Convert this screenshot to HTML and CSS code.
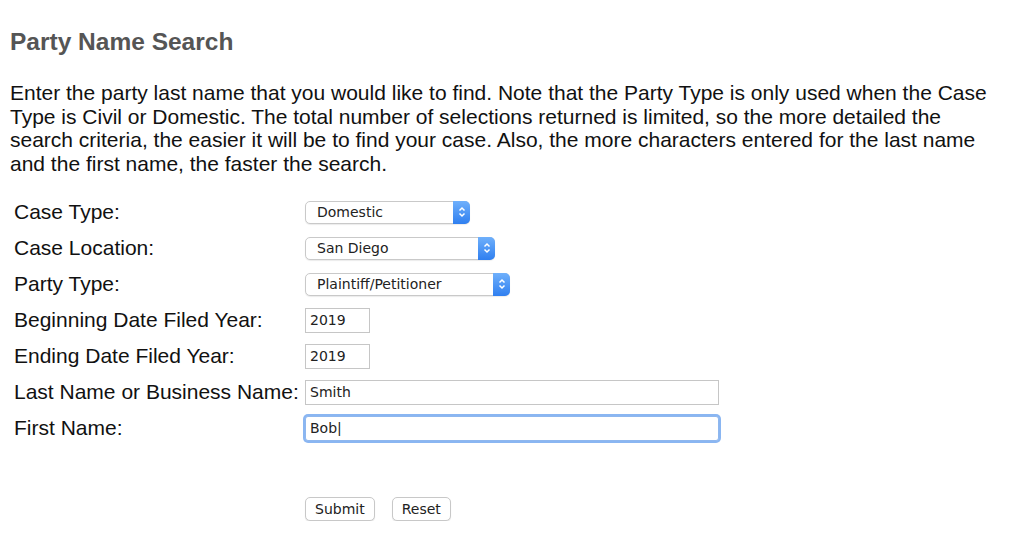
FILE: index.html
```html
<!DOCTYPE html>
<html lang="en">
<head>
  <meta charset="UTF-8">
  <title>Party Name Search</title>
  <link rel="stylesheet" href="styles.css">
</head>
<body>
  <h2 class="title">Party Name Search</h2>
  <p class="intro">Enter the party last name that you would like to find. Note that the Party Type is only used when the Case Type is Civil or Domestic. The total number of selections returned is limited, so the more detailed the search criteria, the easier it will be to find your case. Also, the more characters entered for the last name and the first name, the faster the search.</p>

  <form class="search-form">
    <div class="fields">
      <label class="field-label">Case Type:</label>
      <div class="field">
        <span class="select-wrap w-type">
          <select><option>Domestic</option></select>
          <span class="select-btn"><svg width="8" height="12" viewBox="0 0 8 12"><path d="M1.5 4.5 L4 2 L6.5 4.5 M1.5 7.5 L4 10 L6.5 7.5" fill="none" stroke="#fff" stroke-width="1.5"/></svg></span>
        </span>
      </div>

      <label class="field-label">Case Location:</label>
      <div class="field">
        <span class="select-wrap w-loc">
          <select><option>San Diego</option></select>
          <span class="select-btn"><svg width="8" height="12" viewBox="0 0 8 12"><path d="M1.5 4.5 L4 2 L6.5 4.5 M1.5 7.5 L4 10 L6.5 7.5" fill="none" stroke="#fff" stroke-width="1.5"/></svg></span>
        </span>
      </div>

      <label class="field-label">Party Type:</label>
      <div class="field">
        <span class="select-wrap w-party">
          <select><option>Plaintiff/Petitioner</option></select>
          <span class="select-btn"><svg width="8" height="12" viewBox="0 0 8 12"><path d="M1.5 4.5 L4 2 L6.5 4.5 M1.5 7.5 L4 10 L6.5 7.5" fill="none" stroke="#fff" stroke-width="1.5"/></svg></span>
        </span>
      </div>

      <label class="field-label">Beginning Date Filed Year:</label>
      <div class="field"><input type="text" class="text-input short" value="2019"></div>

      <label class="field-label">Ending Date Filed Year:</label>
      <div class="field"><input type="text" class="text-input short" value="2019"></div>

      <label class="field-label">Last Name or Business Name:</label>
      <div class="field"><input type="text" class="text-input long" value="Smith"></div>

      <label class="field-label">First Name:</label>
      <div class="field"><input type="text" class="text-input long focused" value="Bob|"></div>
    </div>

    <div class="buttons">
      <button type="button" class="btn">Submit</button>
      <button type="button" class="btn">Reset</button>
    </div>
  </form>
</body>
</html>
```

FILE: styles.css
```css
* {
  box-sizing: border-box;
}

body {
  margin: 0;
  padding: 0 10px;
  background: #fff;
  font-family: 'Liberation Sans', Arial, sans-serif;
  color: #111;
}

.title {
  margin: 0;
  padding-top: 28px;
  font-size: 24.5px;
  line-height: 28px;
  font-weight: bold;
  color: #555;
}

.intro {
  margin: 25px 0 0;
  width: 992px;
  font-size: 21px;
  line-height: 23.5px;
}

.search-form {
  margin-top: 19px;
  padding-left: 4px;
}

.fields {
  display: grid;
  grid-template-columns: 291px auto;
  grid-auto-rows: 36px;
  align-items: center;
}

.field-label {
  font-size: 21px;
}

.field {
  display: flex;
  align-items: center;
}

.select-wrap {
  position: relative;
  display: inline-block;
  height: 23px;
}

.select-wrap select {
  appearance: none;
  -webkit-appearance: none;
  width: 100%;
  height: 23px;
  padding: 0 0 0 11px;
  border: 1px solid #c9c9c9;
  border-radius: 5px;
  background: #fff;
  font-family: 'DejaVu Sans', sans-serif;
  font-size: 14px;
  color: #222;
  box-shadow: 0 1px 1px rgba(0, 0, 0, 0.08);
}

.select-btn {
  position: absolute;
  top: 0;
  right: 0;
  width: 17px;
  height: 23px;
  border-radius: 0 5px 5px 0;
  background: linear-gradient(#6fb0fb, #2f7ff0);
  display: flex;
  align-items: center;
  justify-content: center;
}

.w-type { width: 165px; }
.w-loc { width: 190px; }
.w-party { width: 205px; }

.text-input {
  height: 25px;
  padding: 0 4px;
  border: 1px solid #c6c6c6;
  font-family: 'DejaVu Sans', sans-serif;
  font-size: 14px;
  color: #222;
  background: #fff;
}

.text-input.short { width: 65px; }
.text-input.long { width: 414px; }

.text-input.focused {
  border: 1px solid #8fb7ee;
  border-radius: 3px;
  outline: none;
  box-shadow: 0 0 0 2px #8ab6f2;
}

.buttons {
  display: flex;
  gap: 17px;
  margin-top: 51px;
  margin-left: 291px;
}

.btn {
  height: 24px;
  padding: 0 9px;
  border: 1px solid #c8c8c8;
  border-radius: 5px;
  background: #fff;
  font-family: 'DejaVu Sans', sans-serif;
  font-size: 14px;
  color: #222;
  box-shadow: 0 1px 1px rgba(0, 0, 0, 0.1);
}
```
